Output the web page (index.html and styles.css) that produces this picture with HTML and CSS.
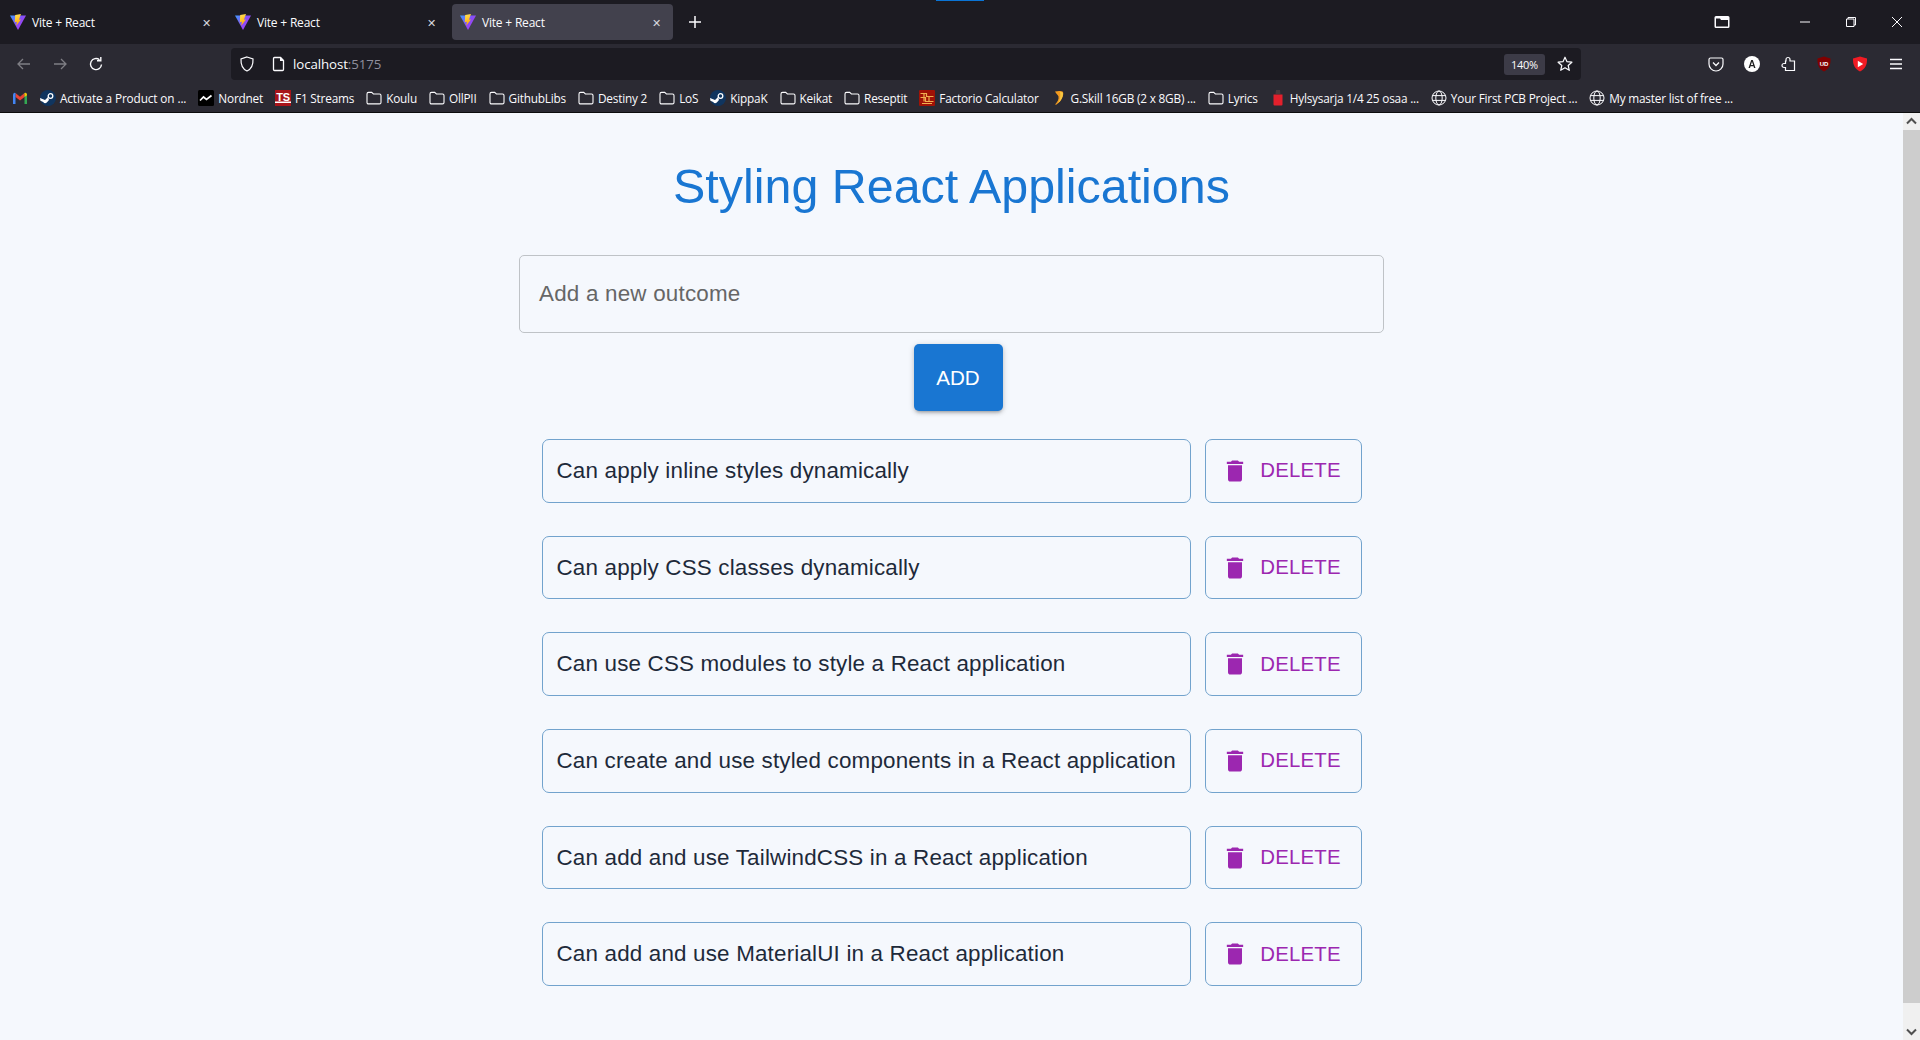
FILE: index.html
```html
<!DOCTYPE html>
<html lang="en">
<head>
    <meta charset="UTF-8">
    <title>Vite + React</title>
    <link rel="stylesheet" href="styles.css">
</head>
<body>
    <svg class="defs" width="0" height="0">
        <defs>
            <linearGradient id="viteBody" x1="0" y1="0" x2="1" y2="0.7">
                <stop offset="0" stop-color="#3f9cff"/>
                <stop offset="0.6" stop-color="#8a4cf5"/>
                <stop offset="1" stop-color="#b33cf8"/>
            </linearGradient>
            <linearGradient id="viteBolt" x1="0" y1="0" x2="0.3" y2="1">
                <stop offset="0" stop-color="#ffe45c"/>
                <stop offset="1" stop-color="#ffa800"/>
            </linearGradient>
            <symbol id="vite" viewBox="0 0 16 16">
                <path fill="url(#viteBody)" d="M0 1.500 16 1.500 8 16z"/>
                <path fill="url(#viteBolt)" d="M11 0 5.200 1 4.800 8.200 6.900 7.700 6.200 11.800 11 5.400 8.900 5.800z"/>
            </symbol>
            <symbol id="folder" viewBox="0 0 16 16">
                <path fill="none" stroke="#fbfbfe" stroke-width="1.1" d="M1 4c0-1 .6-1.6 1.500-1.600h3.200L7.400 4h6.100c.9 0 1.500.6 1.500 1.500v6.900c0 .9-.6 1.500-1.500 1.500h-11C1.600 13.900 1 13.300 1 12.400z"/>
            </symbol>
            <symbol id="globe" viewBox="0 0 16 16">
                <g fill="none" stroke="#fbfbfe" stroke-width="1">
                    <circle cx="8" cy="8" r="7"/>
                    <ellipse cx="8" cy="8" rx="3.200" ry="7"/>
                    <path d="M1.300 5.600h13.400M1.300 10.400h13.400"/>
                </g>
            </symbol>
            <symbol id="steam" viewBox="0 0 16 16">
                <circle cx="8" cy="8" r="8" fill="#10355f"/>
                <path fill="#fff" d="M0 8 5 10 8 7 9 10 6.800 12.600a2.500 2.500 0 0 1-3.600-.6L.4 10.700z"/>
                <circle cx="10.500" cy="6" r="2.300" fill="none" stroke="#fff" stroke-width="1.300"/>
            </symbol>
            <symbol id="trash" viewBox="0 0 24 24">
                <path d="M6 19c0 1.100.9 2 2 2h8c1.100 0 2-.9 2-2V7H6v12zM19 4h-3.500l-1-1h-5l-1 1H5v2h14V4z"/>
            </symbol>
        </defs>
    </svg>

    <div class="browser">
        <div class="tabbar">
            <div class="tab">
                <svg class="tab-icon"><use href="#vite"/></svg>
                <span class="tab-title">Vite + React</span>
                <span class="tab-close">✕</span>
            </div>
            <div class="tab">
                <svg class="tab-icon"><use href="#vite"/></svg>
                <span class="tab-title">Vite + React</span>
                <span class="tab-close">✕</span>
            </div>
            <div class="tab active">
                <svg class="tab-icon"><use href="#vite"/></svg>
                <span class="tab-title">Vite + React</span>
                <span class="tab-close">✕</span>
            </div>
            <svg class="new-tab" width="14" height="14" viewBox="0 0 14 14"><path d="M7 1v12M1 7h12" stroke="#fbfbfe" stroke-width="1.500"/></svg>
            <div class="accent"></div>
            <svg class="tab-list" width="16" height="14" viewBox="0 0 16 14"><path fill="#fbfbfe" d="M2 1h12a1.500 1.500 0 0 1 1.500 1.500v9A1.500 1.500 0 0 1 14 13H2a1.500 1.500 0 0 1-1.500-1.500v-9A1.500 1.500 0 0 1 2 1zm0 4v6.500h12V5H7L6 3.500H2z"/></svg>
            <div class="win-controls">
                <svg width="12" height="12" viewBox="0 0 12 12"><path d="M1 6h10" stroke="#fbfbfe"/></svg>
                <svg width="12" height="12" viewBox="0 0 12 12"><path d="M3 3V1.500h7.500V9H9M1.500 3H9v7.500H1.500z" fill="none" stroke="#fbfbfe"/></svg>
                <svg width="12" height="12" viewBox="0 0 12 12"><path d="M1 1l10 10M11 1 1 11" stroke="#fbfbfe"/></svg>
            </div>
        </div>

        <div class="toolbar">
            <svg class="nav-icon dim" viewBox="0 0 16 16"><path d="M14 8H2M7 3 2 8l5 5" fill="none" stroke="#fbfbfe" stroke-width="1.300"/></svg>
            <svg class="nav-icon dim" viewBox="0 0 16 16"><path d="M2 8h12M9 3l5 5-5 5" fill="none" stroke="#fbfbfe" stroke-width="1.300"/></svg>
            <svg class="nav-icon" viewBox="0 0 16 16"><path d="M13.500 8.500A5.500 5.500 0 1 1 11.500 3.800M12.800 1v3.800H9" fill="none" stroke="#fbfbfe" stroke-width="1.400"/></svg>
            <div class="urlbar">
                <svg class="url-icon" viewBox="0 0 16 16"><path d="M8 1 14 3c.3 6-1.500 10-6 12C3.500 13 1.700 9 2 3z" fill="none" stroke="#fbfbfe" stroke-width="1.200"/></svg>
                <svg class="url-icon" viewBox="0 0 16 16"><path d="M3.500 1.500h6l3 3v9a1 1 0 0 1-1 1h-8a1 1 0 0 1-1-1v-11a1 1 0 0 1 1-1z" fill="none" stroke="#fbfbfe" stroke-width="1.300"/><path d="M9 1.500h1l2.500 2.500v1H9z" fill="#fbfbfe"/></svg>
                <span class="url-text">localhost<span class="url-port">:5175</span></span>
                <span class="zoom-badge">140%</span>
                <svg class="url-icon" viewBox="0 0 16 16"><path d="M8 1.200 10 5.700l4.900.5-3.700 3.300 1.100 4.800L8 11.800l-4.300 2.500 1.100-4.800L1.100 6.200 6 5.700z" fill="none" stroke="#fbfbfe" stroke-width="1.200" stroke-linejoin="round"/></svg>
            </div>
            <div class="ext-icons">
                <svg viewBox="0 0 16 16"><path d="M2.500 2h11A1.500 1.500 0 0 1 15 3.500V8A7 7 0 0 1 1 8V3.500A1.500 1.500 0 0 1 2.500 2z" fill="none" stroke="#fbfbfe" stroke-width="1.200"/><path d="M5 6.500 8 9.500l3-3" fill="none" stroke="#fbfbfe" stroke-width="1.300"/></svg>
                <svg viewBox="0 0 16 16"><circle cx="8" cy="8" r="8" fill="#fff"/><path d="M4.500 12 7.200 4h1.600l2.700 8H10l-.5-1.800h-3L6 12zm2.400-3h2.200L8 5.700z" fill="#222"/></svg>
                <svg viewBox="0 0 16 16"><path d="M6 3.500a2 2 0 0 1 4 0V5h4.500v9.500h-9v-3H4a2 2 0 0 1 0-4h1.500V5H6z" fill="none" stroke="#fbfbfe" stroke-width="1.200"/></svg>
                <svg viewBox="0 0 16 16"><path d="M8 .5 14.500 2.500c.3 6.500-1.500 10.500-6.500 13C3 13 1.200 9 1.500 2.500z" fill="#800000"/><text x="8" y="10" class="ublock">UD</text></svg>
                <svg viewBox="0 0 16 16"><path d="M8 .5 15 2.500c.3 6.500-2 10.500-7 13-5-2.500-7.300-6.500-7-13z" fill="#f01b24"/><path d="M5.800 4.800v6.400L11.200 8z" fill="#fff"/></svg>
                <svg viewBox="0 0 16 16"><path d="M2 3.500h12M2 8h12M2 12.500h12" stroke="#fbfbfe" stroke-width="1.300"/></svg>
            </div>
        </div>

        <div class="bookmarks">
            <div class="bookmark">
                <svg class="bm-icon" viewBox="0 0 16 16"><path d="M3.500 3 8 6.800 12.500 3v4L8 10.500 3.500 7z" fill="#ea4335"/><path d="M1 4.500a2 2 0 0 1 2.500-1.500v11H1z" fill="#4285f4"/><path d="M15 4.500A2 2 0 0 0 12.500 3v11H15z" fill="#34a853"/><path d="M15 4.500A2 2 0 0 0 12.500 3v4L15 5.200z" fill="#fbbc04"/></svg>
            </div>
            <div class="bookmark wide"><svg class="bm-icon"><use href="#steam"/></svg>Activate a Product on ...</div>
            <div class="bookmark">
                <svg class="bm-icon" viewBox="0 0 16 16"><rect width="16" height="16" rx="1.500" fill="#000"/><path d="M2 10.500 5.500 7l3 2.500L13.500 5.500" fill="none" stroke="#fff" stroke-width="1.700"/></svg>
                Nordnet
            </div>
            <div class="bookmark">
                <svg class="bm-icon" viewBox="0 0 16 16"><rect width="16" height="16" fill="#a8141a"/><rect y="11.500" width="16" height="1.500" fill="#fff"/><text x="8" y="10.500" class="ts-logo">TS</text></svg>
                F1 Streams
            </div>
            <div class="bookmark"><svg class="bm-icon"><use href="#folder"/></svg>Koulu</div>
            <div class="bookmark"><svg class="bm-icon"><use href="#folder"/></svg>OllPII</div>
            <div class="bookmark"><svg class="bm-icon"><use href="#folder"/></svg>GithubLibs</div>
            <div class="bookmark"><svg class="bm-icon"><use href="#folder"/></svg>Destiny 2</div>
            <div class="bookmark"><svg class="bm-icon"><use href="#folder"/></svg>LoS</div>
            <div class="bookmark"><svg class="bm-icon"><use href="#steam"/></svg>KippaK</div>
            <div class="bookmark"><svg class="bm-icon"><use href="#folder"/></svg>Keikat</div>
            <div class="bookmark"><svg class="bm-icon"><use href="#folder"/></svg>Reseptit</div>
            <div class="bookmark">
                <svg class="bm-icon" viewBox="0 0 16 16"><rect width="16" height="16" rx="1" fill="#a01206"/><path d="M1.500 3.500h6v3h7M1.500 7.500h5v4h8M5 3.500v8M10 6.500v5M3 13.500h10" fill="none" stroke="#f0b050" stroke-width="1.200"/></svg>
                Factorio Calculator
            </div>
            <div class="bookmark">
                <svg class="bm-icon" viewBox="0 0 16 16"><path d="M4 1.500c3-.8 7-.8 8 .5 1 3-1 9-6.500 12.500-.8.500-1.500 0-1-.5 2-2 3.500-5 3-7.500-.4-1.500-2-2-3.500-5z" fill="#f29a1f"/><path d="M9 2c2 0 3 .5 3 1.500C12 7 10 11 7 13c2-3 3-7 2-11z" fill="#f7c843"/></svg>
                G.Skill 16GB (2 x 8GB) ...
            </div>
            <div class="bookmark"><svg class="bm-icon"><use href="#folder"/></svg>Lyrics</div>
            <div class="bookmark">
                <svg class="bm-icon" viewBox="0 0 16 16"><path d="M6 0h4l.5 4H5.500z" fill="#4a3a3d"/><path d="M3.500 4.500h9v10a1 1 0 0 1-1 1h-7a1 1 0 0 1-1-1z" fill="#e3202c"/></svg>
                Hylsysarja 1/4 25 osaa ...
            </div>
            <div class="bookmark"><svg class="bm-icon"><use href="#globe"/></svg>Your First PCB Project ...</div>
            <div class="bookmark"><svg class="bm-icon"><use href="#globe"/></svg>My master list of free ...</div>
        </div>
    </div>

    <div class="viewport">
        <main class="page">
            <h1 class="title">Styling React Applications</h1>
            <div class="outcome-input">Add a new outcome</div>
            <button class="add-btn">ADD</button>
            <ul class="outcomes">
                <li class="outcome">
                    <div class="outcome-text">Can apply inline styles dynamically</div>
                    <button class="delete-btn"><svg class="trash"><use href="#trash"/></svg>DELETE</button>
                </li>
                <li class="outcome">
                    <div class="outcome-text">Can apply CSS classes dynamically</div>
                    <button class="delete-btn"><svg class="trash"><use href="#trash"/></svg>DELETE</button>
                </li>
                <li class="outcome">
                    <div class="outcome-text">Can use CSS modules to style a React application</div>
                    <button class="delete-btn"><svg class="trash"><use href="#trash"/></svg>DELETE</button>
                </li>
                <li class="outcome">
                    <div class="outcome-text">Can create and use styled components in a React application</div>
                    <button class="delete-btn"><svg class="trash"><use href="#trash"/></svg>DELETE</button>
                </li>
                <li class="outcome">
                    <div class="outcome-text">Can add and use TailwindCSS in a React application</div>
                    <button class="delete-btn"><svg class="trash"><use href="#trash"/></svg>DELETE</button>
                </li>
                <li class="outcome">
                    <div class="outcome-text">Can add and use MaterialUI in a React application</div>
                    <button class="delete-btn"><svg class="trash"><use href="#trash"/></svg>DELETE</button>
                </li>
            </ul>
        </main>
        <div class="scrollbar">
            <svg class="scroll-arrow" viewBox="0 0 17 17"><path d="M4 10.500 8.500 6l4.500 4.500" fill="none" stroke="#505050" stroke-width="2"/></svg>
            <div class="scroll-thumb"></div>
            <svg class="scroll-arrow" viewBox="0 0 17 17"><path d="M4 6.500 8.500 11 13 6.500" fill="none" stroke="#505050" stroke-width="2"/></svg>
        </div>
    </div>
</body>
</html>
```

FILE: styles.css
```css
/* General */
html, body {
    margin: 0;
    padding: 0;
    height: 100%;
    overflow: hidden;
}

body {
    display: flex;
    flex-direction: column;
    background: #f5f8fd;
    font-family: 'Liberation Sans', Arial, sans-serif;
}

.defs {
    position: absolute;
}

/* Browser chrome */
.browser {
    flex: none;
    color: #fbfbfe;
    font-family: 'Open Sans', sans-serif;
    border-bottom: 1px solid #0c0c0d;
}

.tabbar {
    position: relative;
    display: flex;
    align-items: center;
    height: 44px;
    background: #1c1b22;
    padding-left: 2px;
    font-size: 12px;
}

.tab {
    display: flex;
    align-items: center;
    width: 225px;
    height: 36px;
    box-sizing: border-box;
    padding: 0 8px;
    border-radius: 4px;
}

.tab.active {
    width: 221px;
    background: #42414d;
}

.tab-icon {
    width: 16px;
    height: 16px;
    margin-right: 6px;
}

.tab-title {
    flex: 1;
    letter-spacing: -0.2px;
}

.tab-close {
    font-size: 11px;
    margin-right: 8px;
    color: #d8d8de;
}

.tab.active .tab-close {
    margin-right: 4px;
}

.new-tab {
    margin-left: 15px;
}

.accent {
    position: absolute;
    top: 0;
    left: 936px;
    width: 48px;
    height: 1px;
    background: #0a74d6;
}

.tab-list {
    margin-left: auto;
}

.win-controls {
    display: flex;
    gap: 34px;
    margin: 0 17px 0 69px;
}

.toolbar {
    display: flex;
    align-items: center;
    height: 40px;
    background: #2b2a33;
    padding-left: 16px;
}

.nav-icon {
    width: 16px;
    height: 16px;
    margin-right: 20px;
}

.nav-icon.dim {
    opacity: 0.4;
}

.urlbar {
    display: flex;
    align-items: center;
    width: 1350px;
    height: 32px;
    margin-left: 107px;
    background: #1c1b22;
    border-radius: 4px;
    font-size: 13.3px;
}

.url-icon {
    width: 16px;
    height: 16px;
    margin-left: 8px;
    margin-right: 8px;
}

.url-text {
    flex: 1;
    margin-left: -2px;
    letter-spacing: -0.1px;
}

.url-port {
    color: #8f8f9d;
}

.zoom-badge {
    width: 41px;
    height: 21px;
    margin-right: 4px;
    background: #3c3b47;
    border-radius: 3px;
    font-size: 11px;
    line-height: 21px;
    text-align: center;
    letter-spacing: -0.3px;
}

.ext-icons {
    display: flex;
    gap: 20px;
    margin-left: 127px;
}

.ext-icons svg {
    width: 16px;
    height: 16px;
}

.ublock {
    font: bold 6px 'Liberation Sans', sans-serif;
    fill: #fff;
    text-anchor: middle;
}

.ts-logo {
    font: bold 11px 'Liberation Sans', sans-serif;
    fill: #fff;
    text-anchor: middle;
}

.bookmarks {
    display: flex;
    align-items: center;
    height: 28px;
    background: #2b2a33;
    padding-left: 12px;
    gap: 12px;
    font-size: 11.8px;
    letter-spacing: -0.2px;
    white-space: nowrap;
}

.bookmark {
    display: flex;
    align-items: center;
    gap: 4px;
}

.bookmark.wide {
    letter-spacing: -0.12px;
}

.bm-icon {
    width: 16px;
    height: 16px;
}

/* Page */
.viewport {
    flex: 1;
    display: flex;
    min-height: 0;
}

.page {
    flex: 1;
    display: flex;
    flex-direction: column;
    align-items: center;
}

.title {
    margin: 0;
    padding-top: 45px;
    height: 97px;
    font-size: 48.4px;
    font-weight: 400;
    line-height: 56px;
    color: #1976d2;
}

.outcome-input {
    width: 865px;
    height: 78px;
    box-sizing: border-box;
    padding-left: 19px;
    border: 1px solid #bfc3c7;
    border-radius: 5px;
    font-size: 22.4px;
    line-height: 76px;
    letter-spacing: 0.21px;
    color: #666;
}

.add-btn {
    width: 89px;
    height: 67px;
    margin: 11px 0 0 13px;
    border: 0;
    border-radius: 5px;
    background: #1976d2;
    color: #fff;
    font-family: inherit;
    font-size: 20.6px;
    box-shadow: 0 3px 3px -2px rgba(0,0,0,.2), 0 2px 4px rgba(0,0,0,.14), 0 1px 7px rgba(0,0,0,.12);
}

.outcomes {
    list-style: none;
    margin: 28px 0 0;
    padding: 0;
    width: 820px;
    display: flex;
    flex-direction: column;
    gap: 33px;
}

.outcome {
    display: flex;
    gap: 14px;
    height: 63.7px;
}

.outcome-text {
    flex: 1;
    box-sizing: border-box;
    padding-left: 14px;
    border: 1px solid #72a3cd;
    border-radius: 7px;
    font-size: 22.4px;
    line-height: 61px;
    letter-spacing: 0.18px;
    color: #1e2a3a;
    white-space: nowrap;
}

.delete-btn {
    display: flex;
    align-items: center;
    justify-content: center;
    width: 157px;
    padding: 0 4px 0 0;
    background: none;
    border: 1px solid #72a3cd;
    border-radius: 7px;
    color: #9c27b0;
    font-family: inherit;
    font-size: 20.4px;
    letter-spacing: 0.2px;
}

.trash {
    width: 28px;
    height: 28px;
    margin-right: 11px;
    fill: #9c27b0;
}

/* Scrollbar */
.scrollbar {
    flex: none;
    display: flex;
    flex-direction: column;
    width: 17px;
    background: #f0f0f0;
}

.scroll-arrow {
    flex: none;
    width: 17px;
    height: 17px;
}

.scroll-thumb {
    flex: 1;
    margin-bottom: 20px;
    background: #cdcdcd;
}
```
